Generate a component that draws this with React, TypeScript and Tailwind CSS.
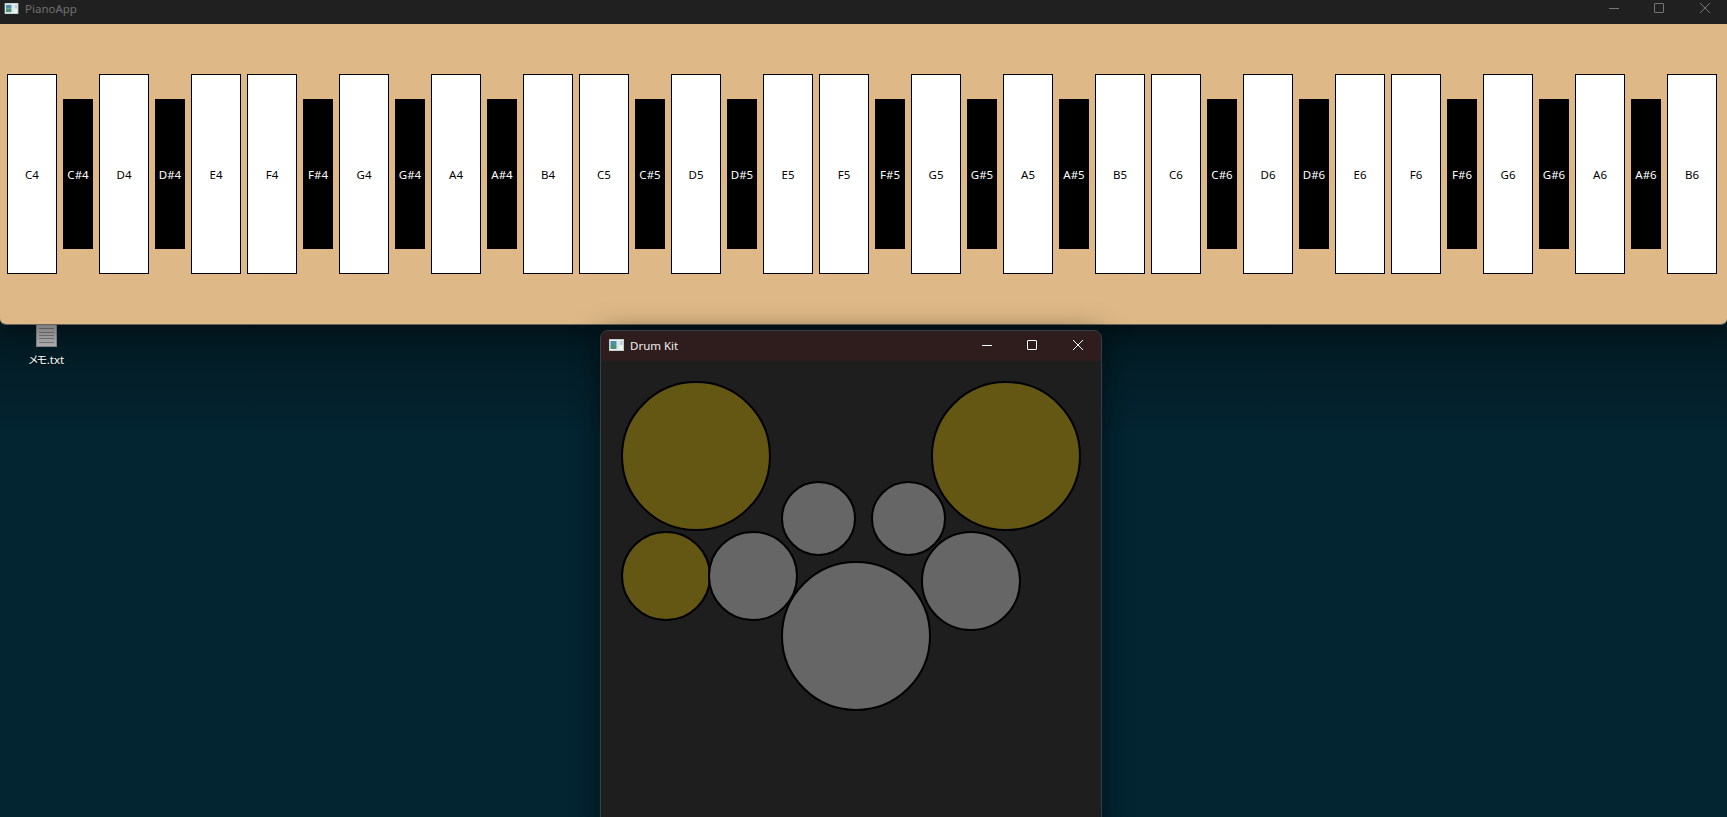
import React from "react";

const FONT = "font-['Noto_Sans','Noto_Sans_CJK_JP',sans-serif]";

// whites and blacks alternate in the order of the chromatic scale
const NOTES = ["C", "C#", "D", "D#", "E", "F", "F#", "G", "G#", "A", "A#", "B"];
const OCTAVES = [4, 5, 6];

function AppIcon({ className }: { className?: string }) {
  return (
    <svg viewBox="0 0 15 12" className={className}>
      <rect x="0" y="0" width="15" height="12" fill="#c4cdd0" />
      <rect x="1" y="1" width="13" height="10" fill="#f0f3f2" />
      <rect x="1.5" y="2" width="6" height="4" fill="#4b8fa5" />
      <rect x="1.5" y="6" width="6" height="4" fill="#4d9079" />
      <rect x="8" y="2" width="2.5" height="8" fill="#dbe8e4" />
      <rect x="11" y="2" width="2.5" height="4" fill="#b4d0da" />
    </svg>
  );
}

function PianoKey({ label }: { label: string }) {
  const sharp = label.includes("#");
  if (sharp) {
    return (
      <div className="w-[30px] h-[150px] pt-[2px] bg-black text-white flex items-center justify-center text-[11.5px] shrink-0">
        {label}
      </div>
    );
  }
  return (
    <div className="w-[50px] h-[200px] pt-[2px] bg-white border border-black text-black flex items-center justify-center text-[11.5px] shrink-0">
      {label}
    </div>
  );
}

function PianoWindow() {
  return (
    <div className="absolute top-0 left-0 w-[1727px] h-[325px] z-10 flex flex-col rounded-b-[6px] overflow-hidden border-b border-[#66635a] shadow-[0_8px_24px_rgba(0,0,0,0.4)]">
      <div className="h-[24px] bg-[#202020] flex items-center shrink-0">
        <AppIcon className="w-[15px] h-[11px] ml-[4px] mb-[8px]" />
        <span className="ml-[6px] text-[11.5px] text-[#707070] mb-[6px]">PianoApp</span>
        <div className="ml-auto flex items-center mb-[8px]">
          <div className="w-[10px] h-px bg-[#777777] mr-[35px]" />
          <div className="w-[10px] h-[10px] border border-[#777777] rounded-[1px] mr-[36px]" />
          <svg viewBox="0 0 10 10" className="w-[10px] h-[10px] mr-[17px]" stroke="#777777" strokeWidth="1">
            <path d="M0 0L10 10M10 0L0 10" />
          </svg>
        </div>
      </div>
      <div className="flex-1 bg-[#deb887] flex items-center gap-[6px] pl-[7px]">
        {OCTAVES.flatMap((octave) =>
          NOTES.map((note) => <PianoKey key={note + octave} label={note + octave} />)
        )}
      </div>
    </div>
  );
}

type Pad = { x: number; y: number; size: number; color: string };

// place on the window's free canvas, measured from the reference
const PADS: Pad[] = [
  { x: 20, y: 20, size: 150, color: "bg-[#645613]" },
  { x: 330, y: 20, size: 150, color: "bg-[#645613]" },
  { x: 20, y: 170, size: 90, color: "bg-[#645613]" },
  { x: 107, y: 170, size: 90, color: "bg-[#666666]" },
  { x: 180, y: 120, size: 75, color: "bg-[#666666]" },
  { x: 270, y: 120, size: 75, color: "bg-[#666666]" },
  { x: 180, y: 200, size: 150, color: "bg-[#666666]" },
  { x: 320, y: 170, size: 100, color: "bg-[#666666]" },
];

function DrumWindow() {
  return (
    <div className="absolute left-[600px] top-[330px] w-[502px] h-[500px] z-20 rounded-t-[8px] border border-[#33424a] bg-[#1e1e1e] shadow-[0_4px_28px_rgba(0,0,0,0.55)] overflow-hidden">
      <div className="h-[30px] bg-[#2f1d1d] flex items-center">
        <AppIcon className="w-[15px] h-[12px] ml-[8px] mb-[2px]" />
        <span className="ml-[6px] text-[11.5px] text-[#eeeeee]">Drum Kit</span>
        <div className="ml-auto flex items-center mb-[2px]">
          <div className="w-[10px] h-px bg-white mr-[35px]" />
          <div className="w-[10px] h-[10px] border border-white rounded-[1px] mr-[36px]" />
          <svg viewBox="0 0 10 10" className="w-[10px] h-[10px] mr-[18px]" stroke="white" strokeWidth="1">
            <path d="M0 0L10 10M10 0L0 10" />
          </svg>
        </div>
      </div>
      <div className="relative">
        {PADS.map((p, i) => (
          <div
            key={i}
            className={`absolute rounded-full border-2 border-black ${p.color}`}
            style={{ left: p.x, top: p.y, width: p.size, height: p.size }}
          />
        ))}
      </div>
    </div>
  );
}

function DesktopIcon() {
  return (
    <div className="absolute left-[10px] top-[324px] w-[72px] flex flex-col items-center">
      <div className="w-[21px] h-[23px] bg-[#b4b4b4] border border-[#8a8a8a] flex flex-col justify-evenly px-[2px] py-[1px]">
        {[0, 1, 2, 3, 4].map((i) => (
          <div key={i} className="h-px bg-[#7c7c7c]" />
        ))}
      </div>
      <span className="mt-[5px] text-[11.5px] leading-[16px] text-white [text-shadow:0_1px_2px_rgba(0,0,0,0.9)]">
        <span className="text-[11px] tracking-[-2.5px] mr-[2px]">メモ</span>.txt
      </span>
    </div>
  );
}

export default function App() {
  return (
    <div className={`relative w-[1727px] h-[817px] overflow-hidden bg-[#032431] ${FONT}`}>
      <div className="absolute inset-x-0 top-[324px] h-[110px] bg-gradient-to-b from-[#031a22] to-[#032431]" />
      <DesktopIcon />
      <PianoWindow />
      <DrumWindow />
    </div>
  );
}
